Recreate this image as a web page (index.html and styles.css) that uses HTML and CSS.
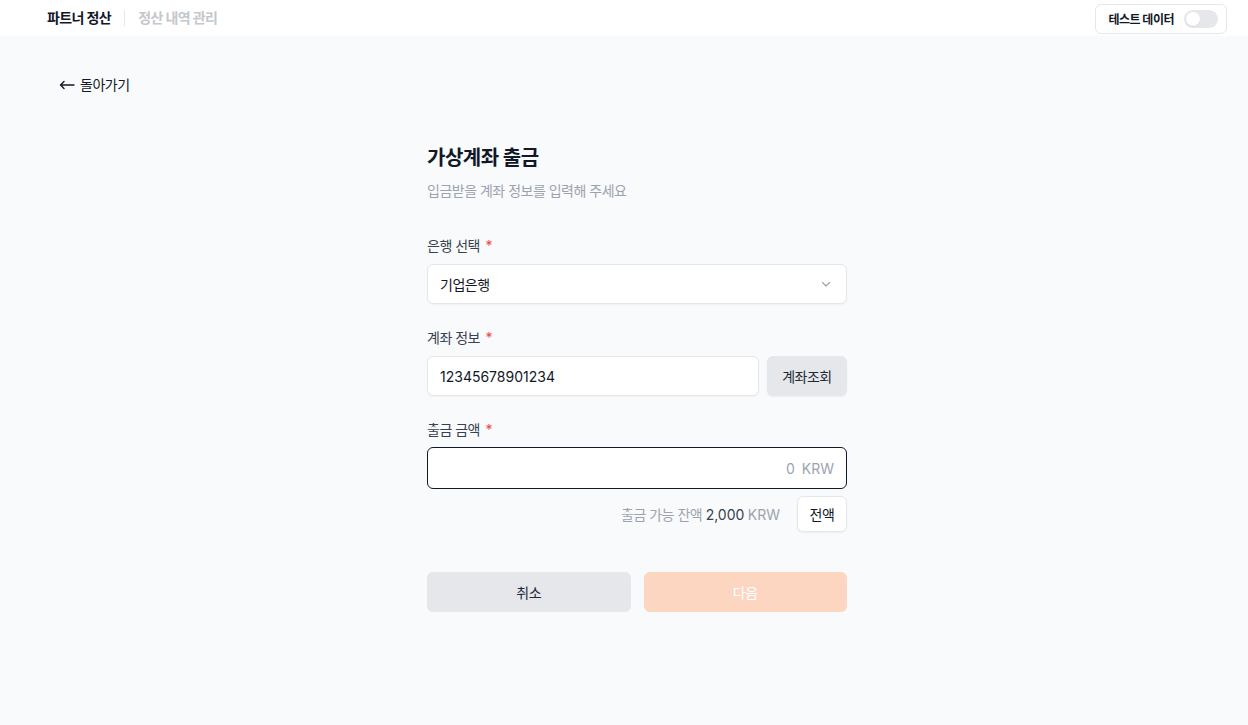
FILE: index.html
```html
<!DOCTYPE html>
<html lang="ko">
<head>
<meta charset="utf-8">
<title>가상계좌 출금</title>
<link rel="stylesheet" href="styles.css">
</head>
<body>
<header class="topbar">
  <nav class="tabs">
    <span class="tab tab-active">파트너 정산</span>
    <span class="tab-divider"></span>
    <span class="tab tab-muted">정산 내역 관리</span>
  </nav>
  <button class="test-toggle" type="button">
    <span class="test-label">테스트 데이터</span>
    <span class="switch"><span class="knob"></span></span>
  </button>
</header>
<main class="main">
  <a class="back" href="#">
    <svg class="back-arrow" width="16" height="10" viewBox="0 0 16 10"><path d="M15 5H1.5M5 1.5 1.5 5 5 8.5" fill="none" stroke="#111827" stroke-width="1.4" stroke-linecap="round" stroke-linejoin="round"/></svg>
    <span>돌아가기</span>
  </a>
  <div class="form-wrap">
    <section class="form">
      <h1 class="title">가상계좌 출금</h1>
      <p class="subtitle">입금받을 계좌 정보를 입력해 주세요</p>

      <div class="field first">
        <label class="label">은행 선택 <span class="req">*</span></label>
        <div class="select">
          <span>기업은행</span>
          <svg class="chev" width="12" height="12" viewBox="0 0 12 12"><path d="M2.5 4.5 6 8l3.5-3.5" fill="none" stroke="#9ca3af" stroke-width="1.2" stroke-linecap="round" stroke-linejoin="round"/></svg>
        </div>
      </div>

      <div class="field">
        <label class="label">계좌 정보 <span class="req">*</span></label>
        <div class="row">
          <div class="input grow num">12345678901234</div>
          <button class="btn-lookup" type="button">계좌조회</button>
        </div>
      </div>

      <div class="field">
        <label class="label">출금 금액 <span class="req">*</span></label>
        <div class="amount num"><span class="amount-ph">0</span><span class="amount-cur">KRW</span></div>
        <div class="balance-row">
          <span class="balance"><span class="muted">출금 가능 잔액</span> <span class="strong num">2,000</span> <span class="muted num">KRW</span></span>
          <button class="btn-all" type="button">전액</button>
        </div>
      </div>

      <div class="actions">
        <button class="btn btn-cancel" type="button">취소</button>
        <button class="btn btn-next" type="button">다음</button>
      </div>
    </section>
  </div>
</main>
</body>
</html>
```
FILE: styles.css
```css
* { box-sizing: border-box; }
html, body { margin: 0; padding: 0; }
body {
  background: #f9fafb;
  font-family: "Inter", "Noto Sans CJK KR", sans-serif;
  color: #111827;
  font-size: 14px;
  letter-spacing: -0.5px;
  min-height: 725px;
}
button { font-family: inherit; letter-spacing: inherit; cursor: pointer; }
.num { letter-spacing: 0; }

.topbar {
  height: 36px;
  background: #fff;
  display: flex;
  align-items: center;
  justify-content: space-between;
  padding: 0 21px 0 47px;
}
.tabs { display: flex; align-items: center; }
.tab { font-size: 14px; font-weight: 700; line-height: 20px; letter-spacing: -0.6px; }
.tab-active { color: #111827; }
.tab-muted { color: #c4c7cc; }
.tab-divider { width: 1px; height: 16px; background: #e5e7eb; margin: 0 13px 0 13px; }

.test-toggle {
  display: flex;
  align-items: center;
  gap: 10px;
  height: 30px;
  margin-top: 1px;
  padding: 0 8px 0 12px;
  border: 1px solid #e5e7eb;
  border-radius: 6px;
  background: #fff;
}
.test-label { font-size: 12px; font-weight: 700; color: #111827; letter-spacing: -0.5px; }
.switch {
  width: 34px; height: 18px; border-radius: 9px;
  background: #e5e7eb;
  display: flex; align-items: center; padding: 0 2px;
}
.knob { width: 14px; height: 14px; border-radius: 50%; background: #fff; box-shadow: 0 1px 1px rgba(0,0,0,0.08); }

.main { padding: 39px 0 0 0; }
.back {
  display: inline-flex; align-items: center; gap: 5px;
  margin-left: 59px;
  font-size: 14px; line-height: 20px; color: #111827; text-decoration: none;
}
.back-arrow { display: block; }

.form-wrap { padding-left: 26px; display: flex; justify-content: center; }
.form { width: 420px; margin-top: 49px; }
.title { margin: 0; font-size: 20px; line-height: 28px; font-weight: 700; color: #111827; }
.subtitle { margin: 9px 0 0; font-size: 14px; line-height: 20px; color: #9ca3af; }

.field { margin-top: 24px; }
.field.first { margin-top: 35px; }
.label { display: block; font-size: 14px; line-height: 20px; color: #374151; margin-bottom: 8px; }
.req { color: #ef4444; margin-left: 2px; }

.select, .input {
  height: 40px;
  background: #fff;
  border: 1px solid #e5e7eb;
  border-radius: 6px;
  box-shadow: 0 1px 2px rgba(0,0,0,0.04);
  display: flex; align-items: center;
  padding: 0 12px;
  font-size: 14px; color: #111827;
}
.select { justify-content: space-between; padding-right: 14px; }
.chev { display: block; }
.row { display: flex; gap: 8px; }
.grow { flex: 1; }
.btn-lookup {
  width: 80px; height: 40px;
  border: none; border-radius: 6px;
  background: #e5e7eb;
  font-size: 14px; color: #1f2937;
  box-shadow: 0 1px 2px rgba(0,0,0,0.05);
}

.amount {
  height: 42px;
  background: #fff;
  border: 1px solid #111827;
  border-radius: 6px;
  display: flex; align-items: center; justify-content: flex-end;
  gap: 7px;
  padding: 0 12px;
  font-size: 14px; color: #9ca3af;
  margin-top: -1px;
}
.balance-row {
  display: flex; align-items: center; justify-content: flex-end;
  gap: 17px;
  margin-top: 7px;
}
.balance { font-size: 14px; }
.muted { color: #9ca3af; }
.strong { color: #374151; }
.btn-all {
  width: 50px; height: 36px;
  background: #fff;
  border: 1px solid #e5e7eb;
  border-radius: 6px;
  font-size: 14px; color: #111827;
  box-shadow: 0 1px 2px rgba(0,0,0,0.05);
}

.actions { display: flex; gap: 13px; margin-top: 40px; }
.btn {
  flex: 1; height: 40px;
  border: none; border-radius: 6px;
  font-size: 14px;
}
.btn-cancel { background: #e5e7eb; color: #1f2937; }
.btn-next { background: #fdd6c2; color: #fff; }
```
